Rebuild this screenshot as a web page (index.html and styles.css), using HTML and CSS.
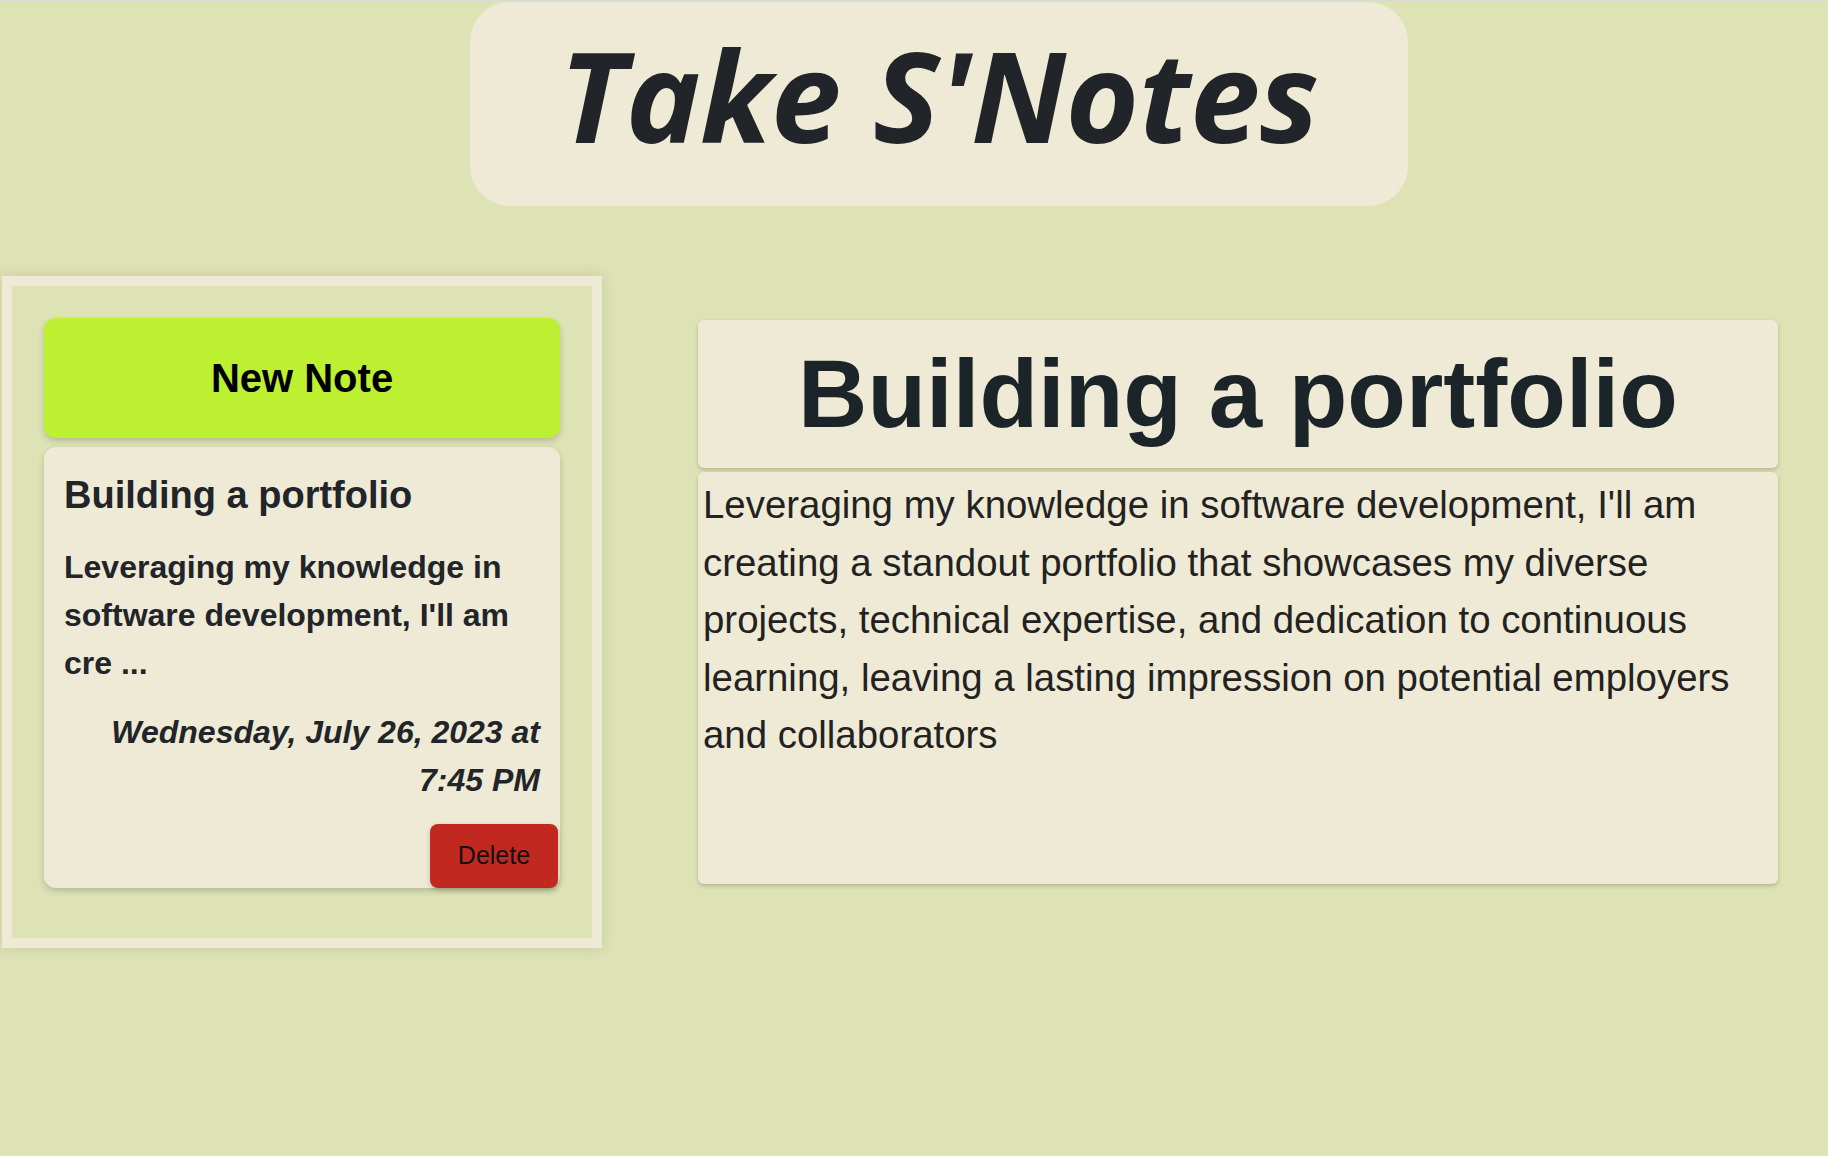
FILE: index.html
```html
<!DOCTYPE html>
<html lang="en">
<head>
<meta charset="utf-8">
<title>Take S'Notes</title>
<link rel="stylesheet" href="styles.css">
</head>
<body>
  <header class="top">
    <div class="brand">
      <h1 class="brand-title">Take S'Notes</h1>
    </div>
  </header>
  <div class="layout">
    <aside class="sidebar">
      <button class="new-note">New Note</button>
      <div class="note-card">
        <h3 class="note-card-title">Building a portfolio</h3>
        <p class="note-card-body">Leveraging my knowledge in software development, I'll am cre ...</p>
        <p class="note-card-date">Wednesday, July 26, 2023 at 7:45 PM</p>
        <button class="delete">Delete</button>
      </div>
    </aside>
    <main class="editor">
      <div class="editor-title-box">
        <h1 class="editor-title">Building a portfolio</h1>
      </div>
      <div class="editor-body">Leveraging my knowledge in software development, I'll am creating a standout portfolio that showcases my diverse projects, technical expertise, and dedication to continuous learning, leaving a lasting impression on potential employers and collaborators</div>
    </main>
  </div>
</body>
</html>
```

FILE: styles.css
```css
* { box-sizing: border-box; }

html, body {
  height: 100%;
}

body {
  margin: 0;
  border-top: 2px solid #dadbd4;
  background: #dee3b6;
  font-family: "Liberation Sans", Arial, sans-serif;
  color: #212529;
}

.top {
  display: flex;
}

.brand {
  width: 938px;
  height: 204px;
  margin-left: 470px;
  border-radius: 40px;
  background: #efead5;
  display: flex;
  align-items: center;
  justify-content: center;
}

.brand-title {
  margin: 0 0 20px 0;
  font-family: "Open Sans", sans-serif;
  font-style: italic;
  font-weight: 700;
  font-size: 126px;
  line-height: 1;
  letter-spacing: -0.5px;
  color: #212529;
}

.layout {
  display: flex;
  align-items: flex-start;
  margin-top: 70px;
  padding-left: 2px;
}

.sidebar {
  width: 600px;
  border: 10px solid #efead5;
  padding: 32px;
  box-shadow: 0 0 14px rgba(0, 0, 0, 0.12);
  display: flex;
  flex-direction: column;
}

.new-note {
  height: 120px;
  width: 100%;
  border: none;
  border-radius: 12px;
  background: #bcf030;
  color: #000;
  font-family: "Liberation Sans", Arial, sans-serif;
  font-weight: 700;
  font-size: 40px;
  box-shadow: 0 3px 6px rgba(0, 0, 0, 0.18);
}

.note-card {
  margin-top: 9px;
  margin-bottom: 18px;
  background: #efead5;
  border-radius: 12px;
  padding: 0 20px;
  display: flex;
  flex-direction: column;
  box-shadow: 0 3px 6px rgba(0, 0, 0, 0.18);
}

.note-card-title {
  margin: 26px 0 24px 0;
  font-size: 38px;
  line-height: 45.6px;
  font-weight: 700;
}

.note-card-body {
  margin: 0;
  font-size: 32px;
  line-height: 48px;
  font-weight: 700;
}

.note-card-date {
  margin: 21px 0 0 0;
  text-align: right;
  font-size: 32px;
  line-height: 48px;
  font-weight: 700;
  font-style: italic;
}

.delete {
  align-self: flex-end;
  margin: 20px -18px 0 0;
  width: 128px;
  height: 64px;
  border: none;
  border-radius: 8px;
  background: #c1281f;
  color: #111;
  font-family: "Liberation Sans", Arial, sans-serif;
  font-size: 25px;
  box-shadow: 0 2px 5px rgba(0, 0, 0, 0.2);
}

.editor {
  width: 1080px;
  margin-left: 96px;
  margin-top: 44px;
}

.editor-title-box {
  height: 148px;
  background: #efead5;
  border-radius: 6px;
  display: flex;
  align-items: center;
  justify-content: center;
  box-shadow: 0 2px 4px rgba(0, 0, 0, 0.2);
}

.editor-title {
  margin: 0;
  font-size: 96px;
  line-height: 1;
  font-weight: 700;
  color: #1b2529;
}

.editor-body {
  margin-top: 4px;
  height: 412px;
  padding: 4px 5px;
  background: #efead5;
  border-radius: 6px;
  font-size: 38.4px;
  line-height: 57.6px;
  color: #222;
  box-shadow: 0 2px 4px rgba(0, 0, 0, 0.2);
}
```
